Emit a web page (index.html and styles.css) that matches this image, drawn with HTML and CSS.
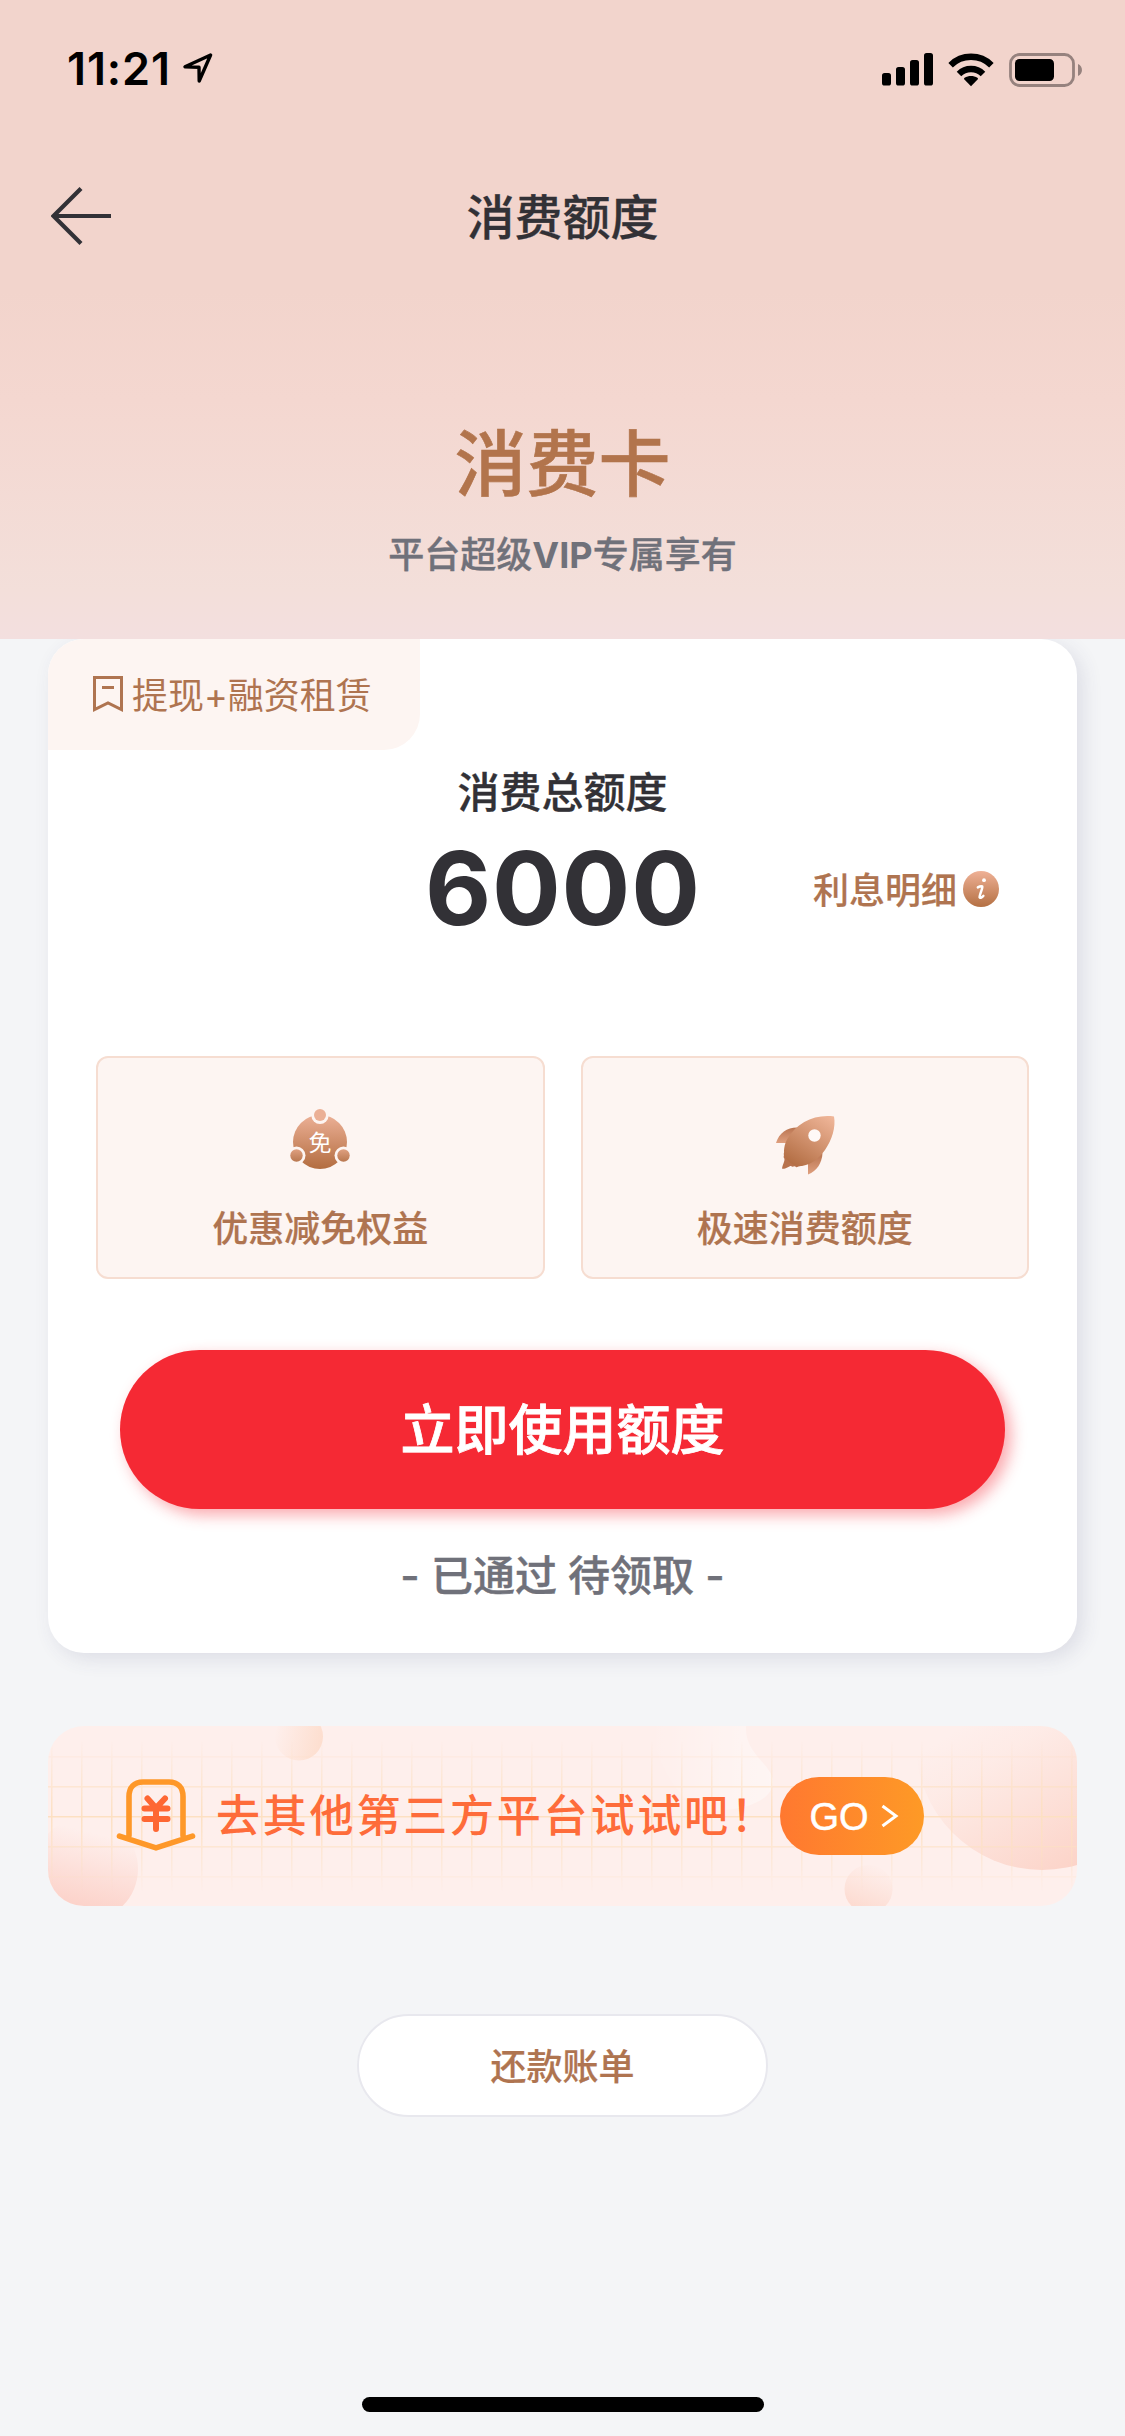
FILE: index.html
```html
<!DOCTYPE html>
<html lang="zh-CN">
<head>
<meta charset="utf-8">
<title>消费额度</title>
<link rel="stylesheet" href="styles.css">
</head>
<body>
<div class="screen">
  <header class="hero">
    <div class="status">
      <div class="status-left">
        <span class="time">11:21</span>
        <svg width="32" height="32" viewBox="0 0 32 32" fill="none" stroke="#000" stroke-width="3.400" stroke-linejoin="round"><path d="M28.600 3 L3 14.800 L17 15.200 L17.200 29 Z"/></svg>
      </div>
      <div class="status-right">
        <svg width="51" height="33" viewBox="0 0 51 33"><rect x="0" y="20" width="9" height="12.500" rx="2.600"/><rect x="14" y="14" width="9" height="18.500" rx="2.600"/><rect x="28" y="7" width="9" height="25.500" rx="2.600"/><rect x="42" y="0" width="9" height="32.500" rx="2.600"/></svg>
        <svg class="wifi" width="46" height="34" viewBox="0 0 46 34"><g fill="none" stroke="#000" stroke-width="6.400"><path d="M2.600 12.200 A29 29 0 0 1 43.400 12.200"/><path d="M11 20.900 A17 17 0 0 1 35 20.900"/></g><path d="M23 33.200 L16.400 26.600 C15.800 26 15.900 25.200 16.600 24.700 C20.400 22.300 25.600 22.300 29.400 24.700 C30.100 25.200 30.200 26 29.600 26.600 Z"/></svg>
        <svg width="74" height="34" viewBox="0 0 74 34"><rect x="1.500" y="1.500" width="63" height="31" rx="9" fill="none" stroke="#96827e" stroke-width="2.800"/><rect x="6" y="6" width="39" height="22" rx="4.500"/><path d="M69 11 C74.300 13 74.300 21 69 23 Z" fill="#96827e"/></svg>
      </div>
    </div>
    <nav class="navbar">
      <svg class="back" width="62" height="60" viewBox="0 0 62 60" fill="none" stroke="#323136" stroke-width="4.200"><path d="M60 30 H3 M30 2.500 L2.500 30 L30 57.500"/></svg>
      <h1 class="nav-title">消费额度</h1>
    </nav>
    <div class="card-name">消费卡</div>
    <div class="card-sub">平台超级<b>VIP</b>专属享有</div>
  </header>

  <main class="content">
    <section class="card">
      <div class="tag">
        <svg width="30" height="37" viewBox="0 0 30 37" fill="none" stroke="#af7450" stroke-width="3"><path d="M1.500 1.500 H28.500 V33.500 L15 27 L1.500 33.500 Z M9 11.500 H21"/></svg>
        <span>提现+融资租赁</span>
      </div>
      <div class="total-label">消费总额度</div>
      <div class="amount-row">
        <span class="amount">6000</span>
        <a class="interest"><span>利息明细</span>
          <svg width="36" height="36" viewBox="0 0 36 36"><defs><linearGradient id="gi" x1="0" y1="0" x2="0" y2="1"><stop offset="0" stop-color="#efb196"/><stop offset="1" stop-color="#b47043"/></linearGradient></defs><circle cx="18" cy="18" r="18" fill="url(#gi)"/><circle cx="21" cy="9.200" r="1.900" fill="#fff"/><path d="M14.800 16.400 C16.500 15.400 18.300 15 19.300 15.400 C20 17.200 16.200 24 16.600 26.500 C17.200 27.600 19 26.200 20.400 24.800" fill="none" stroke="#fff" stroke-width="2.400" stroke-linecap="round" stroke-linejoin="round"/></svg>
        </a>
      </div>
      <div class="perks">
        <div class="perk">
          <svg width="60" height="61" viewBox="0 0 60 61">
            <defs>
              <linearGradient id="gm" gradientUnits="userSpaceOnUse" x1="0" y1="6" x2="0" y2="60"><stop offset="0" stop-color="#ecb096"/><stop offset="1" stop-color="#b36d40"/></linearGradient>
              <linearGradient id="gs" x1="0" y1="0" x2="0" y2="1"><stop offset="0" stop-color="#dfa080"/><stop offset="1" stop-color="#b97850"/></linearGradient>
            </defs>
            <circle cx="30" cy="33" r="27" fill="url(#gm)"/>
            <g fill="#fdf5f2"><circle cx="30" cy="6.500" r="8.600"/><circle cx="6.500" cy="46.500" r="9"/><circle cx="53.500" cy="46.500" r="9"/></g>
            <circle cx="30" cy="6" r="6" fill="#ebb096"/><circle cx="6.500" cy="46.500" r="6.200" fill="url(#gs)"/><circle cx="53.500" cy="46.500" r="6.200" fill="url(#gs)"/>
            <text x="30" y="41.500" class="perk-glyph">免</text>
          </svg>
          <span>优惠减免权益</span>
        </div>
        <div class="perk">
          <svg width="60" height="61" viewBox="0 -4 60 61" overflow="visible">
            <defs>
              <linearGradient id="gr" x1="0.900" y1="0" x2="0.250" y2="1"><stop offset="0" stop-color="#efb598"/><stop offset="1" stop-color="#b46f45"/></linearGradient>
              <linearGradient id="gf" x1="0.500" y1="0" x2="0.500" y2="1"><stop offset="0" stop-color="#b97450"/><stop offset="1" stop-color="#df9f7e"/></linearGradient>
            </defs>
            <path d="M22 14.500 C12 14.500 4 20 1 30 L13 30 Z" fill="url(#gf)"/>
            <path d="M47.500 40 C47 50 42 58 33 61.500 L33 50 Z" fill="url(#gf)"/>
            <path d="M11 38 C7 40 10 42 8.500 44 C11 47 8 50 7 55.500 C9 57 14 53 16 53 C18 55 19 52 21 54 C22 55 23 53 25 53 L22 42 Z" fill="#b8724d"/>
            <path d="M59 3.500 C39 1 22 10 13 25 C9 31 8 39 10 44 C13 49 19 54 27 53 C38 51 45 44 50 37 C57 27 61 14 59 3.500 Z" fill="url(#gr)"/>
            <circle cx="39.500" cy="22.500" r="6.200" fill="#fff9f7"/>
          </svg>
          <span>极速消费额度</span>
        </div>
      </div>
      <button class="primary">立即使用额度</button>
      <div class="state">- 已通过 待领取 -</div>
    </section>

    <section class="banner">
      <svg class="banner-bg" width="1029" height="180" viewBox="0 0 1029 180">
        <defs>
          <linearGradient id="fade" x1="0" y1="0" x2="0" y2="1"><stop offset="0.080" stop-color="#fff" stop-opacity="0"/><stop offset="0.500" stop-color="#fff"/><stop offset="0.920" stop-color="#fff" stop-opacity="0"/></linearGradient>
          <mask id="gridmask"><rect width="1029" height="180" fill="url(#fade)"/></mask>
          <pattern id="grid" x="3" y="0" width="30" height="30" patternUnits="userSpaceOnUse"><path d="M0.750 0 V30 M0 0.750 H30" stroke="#fde0c2" stroke-width="1.500"/></pattern>
          <linearGradient id="b1" x1="0.600" y1="0" x2="0.350" y2="1"><stop offset="0.150" stop-color="#fbc6bb" stop-opacity="0"/><stop offset="1" stop-color="#fbc6bb" stop-opacity="0.850"/></linearGradient>
          <linearGradient id="b2" x1="0" y1="0.400" x2="1" y2="0.600"><stop offset="0" stop-color="#fddccb" stop-opacity="0"/><stop offset="1" stop-color="#fddccb" stop-opacity="0.900"/></linearGradient>
          <linearGradient id="b3" gradientUnits="userSpaceOnUse" x1="915" y1="0" x2="1010" y2="150"><stop offset="0" stop-color="#fbc8ba" stop-opacity="0"/><stop offset="0.250" stop-color="#fbcdbd" stop-opacity="0.120"/><stop offset="1" stop-color="#fbc8ba" stop-opacity="0.700"/></linearGradient>
          <linearGradient id="b4" x1="0.700" y1="0" x2="0.300" y2="1"><stop offset="0" stop-color="#fcd8cb" stop-opacity="0"/><stop offset="1" stop-color="#fcd3c6" stop-opacity="0.800"/></linearGradient>
          <linearGradient id="b5" x1="0" y1="0.500" x2="1" y2="0.500"><stop offset="0" stop-color="#fff" stop-opacity="0"/><stop offset="1" stop-color="#fff" stop-opacity="0.420"/></linearGradient>
        </defs>
        <path d="M600 0 H698 C696 28 724 38 725 55 C726 72 700 86 662 84 C630 80 612 40 600 0 Z" fill="url(#b5)"/>
        <circle cx="251" cy="10.500" r="24" fill="url(#b2)"/>
        <circle cx="38" cy="143" r="52" fill="url(#b1)"/>
        <circle cx="994" cy="18" r="126" fill="url(#b3)"/>
        <circle cx="820.500" cy="163" r="24" fill="url(#b4)"/>
        <rect width="1029" height="180" fill="url(#grid)" mask="url(#gridmask)"/>
      </svg>
      <svg class="banner-icon" width="80" height="76" viewBox="0 0 80 76" fill="none" stroke-linecap="round">
        <path d="M13 62 V23 C13 14 18 8.500 27 8.500 H53 C62 8.500 67 14 67 23 V62 M3.500 62.700 L40 74.300 L76.500 62.700" transform="translate(0 -4.500)" stroke="#fe9829" stroke-width="5.600"/>
        <path d="M31.500 20.500 L40 30 L49 20.500 M28.500 30.500 H51.500 M28.500 41 H51.500 M40 30 V51" stroke="#fe6733" stroke-width="6"/>
      </svg>
      <span class="banner-text">去其他第三方平台试试吧！</span>
      <a class="go"><span>GO</span><svg width="18" height="24" viewBox="0 0 18 24" fill="none" stroke="#fff" stroke-width="3"><path d="M1.500 2 L15 12 L1.500 22"/></svg></a>
    </section>

    <button class="bill">还款账单</button>
  </main>
  <div class="home-indicator"></div>
</div>
</body>
</html>
```
FILE: styles.css
```css
* { box-sizing: border-box; }
body { margin: 0; background: #f4f5f7; }
button { border: 0; padding: 0; font: inherit; }
svg { display: block; flex: none; }

.screen {
  width: 1125px;
  height: 2436px;
  display: flex;
  flex-direction: column;
  background: #f4f5f7;
  font-family: Inter, "Noto Sans CJK SC", sans-serif;
  font-weight: 500;
  color: #323136;
  overflow: hidden;
}

.hero {
  flex: none;
  height: 639px;
  background: linear-gradient(to bottom, #f2d4cc 0, #f2d4cc 290px, #f4d7d0 400px, #f3dfda 590px, #f3dfdf 639px);
  display: flex;
  flex-direction: column;
  align-items: center;
}
.status {
  width: 100%;
  height: 132px;
  padding: 0 42px 0 67px;
  display: flex;
  justify-content: space-between;
  align-items: flex-start;
}
.status-left { display: flex; gap: 12px; padding-top: 43px; align-items: center; }
.status-left svg { margin-bottom: 2px; }
.time { width: 103px; font-size: 45px; line-height: 52px; font-weight: 600; letter-spacing: 0.9px; white-space: nowrap; color: #000; }
.status-right { display: flex; gap: 15px; padding-top: 53px; }

.navbar {
  width: 100%;
  height: 168px;
  padding: 0 51px;
  display: grid;
  grid-template-columns: 62px 1fr 62px;
  align-items: center;
}
.nav-title { margin: 0; padding-top: 3px; font-size: 48px; line-height: 72px; font-weight: 500; text-align: center; -webkit-text-stroke: 0.3px; }
.card-name { margin-top: 110px; font-size: 72px; line-height: 108px; color: #b2744c; -webkit-text-stroke: 0.6px; }
.card-sub { margin-top: 10px; font-size: 36px; line-height: 54px; color: #70717a; -webkit-text-stroke: 0.4px; }
.card-sub b { font-weight: 700; -webkit-text-stroke: 0; }

.content { flex: 1; padding: 0 48px; display: flex; flex-direction: column; align-items: center; }

.card {
  width: 100%;
  height: 1014px;
  border-radius: 36px;
  background: #fff;
  box-shadow: 6px 6px 20px rgba(60, 60, 110, 0.12);
  clip-path: inset(0 -48px -48px -48px);
  display: flex;
  flex-direction: column;
  align-items: center;
}
.tag {
  align-self: flex-start;
  width: 372px;
  height: 111px;
  padding-left: 45px;
  border-radius: 36px 0 36px 0;
  background: #fdf5f2;
  display: flex;
  align-items: center;
  gap: 9px;
  font-size: 36px;
  font-weight: 400;
  color: #af7450;
}
.tag span { padding-bottom: 4px; }
.total-label { margin-top: 11px; font-size: 42px; line-height: 63px; -webkit-text-stroke: 0.3px; }
.amount-row {
  width: 100%;
  height: 130px;
  padding: 0 78px;
  display: grid;
  grid-template-columns: 1fr auto 1fr;
  align-items: center;
}
.amount { grid-column: 2; margin-top: -2px; font-size: 102px; line-height: 130px; font-weight: 700; letter-spacing: 0.8px; margin-right: -0.8px; }
.interest {
  justify-self: end;
  display: flex;
  align-items: center;
  gap: 6px;
  font-size: 36px;
  line-height: 54px;
  color: #af7450;
  -webkit-text-stroke: 0.2px;
}
.interest span { padding-top: 3px; }
.perks { width: 933px; margin-top: 102px; display: grid; grid-template-columns: 1fr 1fr; gap: 36px; }
.perk {
  height: 223px;
  padding-top: 51px;
  border: 2px solid #f6ddd1;
  border-radius: 12px;
  background: #fdf5f2;
  display: flex;
  flex-direction: column;
  align-items: center;
  gap: 32px;
  font-size: 36px;
  line-height: 54px;
  color: #af7450;
}
.perk span { -webkit-text-stroke: 0.2px; }
.perk-glyph { font-size: 23px; font-weight: 400; fill: #fff; text-anchor: middle; }
.primary {
  width: 885px;
  height: 159px;
  margin-top: 71px;
  padding-top: 3px;
  border-radius: 80px;
  background: #f52934;
  box-shadow: 6px 6px 15px rgba(245, 41, 52, 0.4);
  color: #fff;
  font-size: 54px;
  line-height: 80px;
  -webkit-text-stroke: 0.8px;
}
.state { margin-top: 35px; font-size: 42px; line-height: 63px; color: #70717a; -webkit-text-stroke: 0.4px; }

.banner {
  position: relative;
  flex: none;
  width: 100%;
  height: 180px;
  margin-top: 73px;
  padding-left: 68px;
  border-radius: 36px;
  background: #feefec;
  overflow: hidden;
  display: flex;
  align-items: center;
}
.banner-bg { position: absolute; inset: 0; }
.banner-icon, .banner-text, .go { position: relative; }
.banner-text {
  width: 536px;
  margin-left: 20px;
  font-size: 44px;
  line-height: 66px;
  letter-spacing: 2.8px;
  white-space: nowrap;
  color: #fe6c3a;
}
.go {
  width: 144px;
  height: 78px;
  margin-left: 28px;
  padding-left: 4px;
  border-radius: 39px;
  background: linear-gradient(to right, #ff7830, #fe9a26);
  display: flex;
  align-items: center;
  justify-content: center;
  gap: 12px;
  color: #fff;
  font: 400 38px/78px "Liberation Sans", Arial, sans-serif;
  -webkit-text-stroke: 0.5px;
}
.go span { padding-top: 2px; }

.bill {
  width: 411px;
  height: 103px;
  margin-top: 108px;
  padding-top: 2px;
  border: 2px solid #e8e8ee;
  border-radius: 52px;
  background: #fff;
  font-size: 36px;
  line-height: 54px;
  color: #af7450;
  -webkit-text-stroke: 0.2px;
}
.home-indicator { flex: none; width: 402px; height: 15px; margin: 0 auto 24px; border-radius: 8px; background: #000; }
```
